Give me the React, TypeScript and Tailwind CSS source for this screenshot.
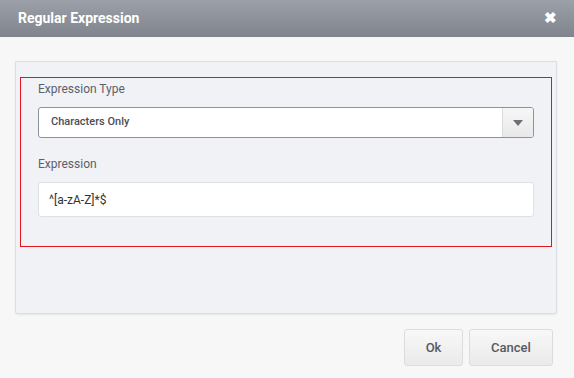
export default function App() {
  return (
    <div className="w-[574px] h-[378px] bg-[#f7f7f7] flex flex-col font-['Roboto',sans-serif]">
      <div className="h-[37px] flex items-center justify-between pl-[18px] pr-[17px] bg-gradient-to-b from-[#9ca0a8] to-[#7f848d]">
        <span className="text-[14px] font-bold text-white">Regular Expression</span>
        <span className="text-white text-[15px] font-bold leading-none">✖</span>
      </div>

      <div className="pt-[24px] pl-[15px] pr-[17px]">
        <div className="h-[253px] bg-[#f1f2f6] border border-[#dcdee3] rounded-b-[3px] shadow-[0_1px_2px_rgba(0,0,0,0.08)] pt-[15px] px-[4px]">
          <div className="h-[170px] border border-[#e3141e] px-[17px] pt-[3px]">
            <div className="text-[12px] leading-[16px] text-[#5b606b]">Expression Type</div>
            <div className="mt-[10px] h-[31px] flex bg-white border border-[#8a93a6] rounded-[3px] overflow-hidden">
              <div className="flex-1 flex items-center pl-[12px] text-[11px] font-medium text-[#4a4d55]">
                Characters Only
              </div>
              <div className="w-[31px] flex items-center justify-center bg-gradient-to-b from-[#f6f6f6] to-[#e9e9ea] border-l border-[#dadbde]">
                <svg width="10" height="6" viewBox="0 0 10 6">
                  <path d="M0 0h10L5 6z" fill="#6b6f78" />
                </svg>
              </div>
            </div>
            <div className="mt-[18px] text-[12px] leading-[16px] text-[#5b606b]">Expression</div>
            <div className="mt-[10px] h-[35px] flex items-center bg-white border border-[#dde0e5] rounded-[3px] pl-[10px] text-[12px] text-[#333]">
              ^[a-zA-Z]*$
            </div>
          </div>
        </div>
      </div>

      <div className="flex justify-end gap-[6px] pr-[21px] mt-[15px]">
        <button className="w-[59px] h-[37px] rounded-[3px] border border-[#dcdcdc] bg-gradient-to-b from-[#f8f8f8] to-[#eaeaea] text-[13px] font-medium text-[#555a62]">
          Ok
        </button>
        <button className="w-[84px] h-[37px] rounded-[3px] border border-[#dcdcdc] bg-gradient-to-b from-[#f8f8f8] to-[#eaeaea] text-[13px] font-medium text-[#555a62]">
          Cancel
        </button>
      </div>
    </div>
  )
}
